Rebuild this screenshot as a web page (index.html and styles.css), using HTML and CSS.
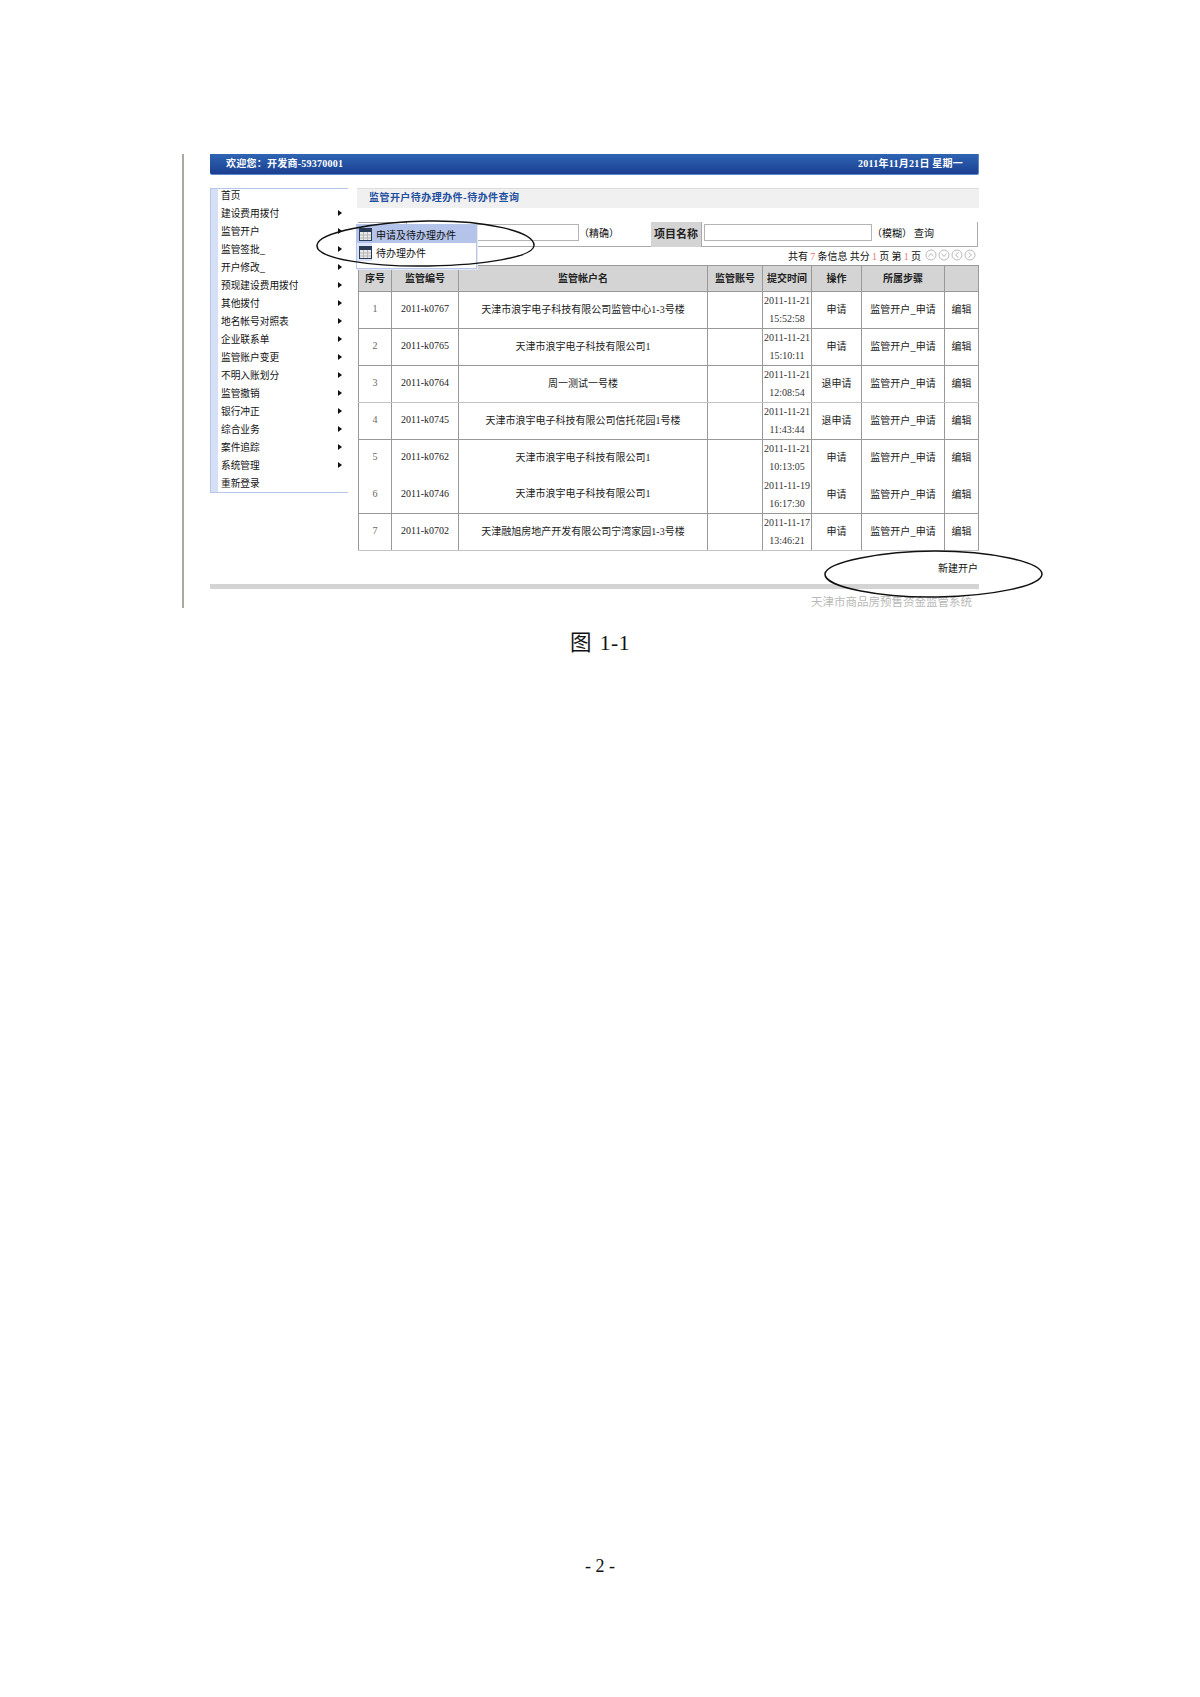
FILE: index.html
```html
<!DOCTYPE html>
<html lang="zh-CN">
<head>
<meta charset="utf-8">
<title>图 1-1</title>
<link rel="stylesheet" href="styles.css">
</head>
<body>
<div class="page">
  <div class="frame">
    <header class="banner">
      <span>欢迎您：开发商<span class="serif">-59370001</span></span>
      <span><span class="serif">2011</span>年<span class="serif">11</span>月<span class="serif">21</span>日 星期一</span>
    </header>
    <div class="main">
      <nav class="side">
        <div class="item first">首页</div>
        <div class="item sub">建设费用拨付</div>
        <div class="item sub">监管开户</div>
        <div class="item sub">监管签批_</div>
        <div class="item sub">开户修改_</div>
        <div class="item sub">预现建设费用拨付</div>
        <div class="item sub">其他拨付</div>
        <div class="item sub">地名帐号对照表</div>
        <div class="item sub">企业联系单</div>
        <div class="item sub">监管账户变更</div>
        <div class="item sub">不明入账划分</div>
        <div class="item sub">监管撤销</div>
        <div class="item sub">银行冲正</div>
        <div class="item sub">综合业务</div>
        <div class="item sub">案件追踪</div>
        <div class="item sub">系统管理</div>
        <div class="item">重新登录</div>
      </nav>
      <section class="content">
        <h1 class="title">监管开户待办理办件-待办件查询</h1>
        <div class="search">
          <div class="cell-a"></div>
          <input class="in-a" type="text">
          <span class="hint-a">（精确）</span>
          <div class="label">项目名称</div>
          <input class="in-b" type="text">
          <span class="hint-b">（模糊）</span>
          <span class="query">查询</span>
        </div>
        <div class="pager">
          <span>共有 <b class="num">7</b> 条信息 共分 <b class="num">1</b> 页 第 <b class="num">1</b> 页</span>
          <span class="pg-icons">
            <svg class="pg" viewBox="0 0 12 12"><circle cx="6" cy="6" r="5"/><path d="M3.5 7.5 6 4.5l2.5 3"/></svg>
            <svg class="pg" viewBox="0 0 12 12"><circle cx="6" cy="6" r="5"/><path d="M3.5 4.5 6 7.5l2.5-3"/></svg>
            <svg class="pg" viewBox="0 0 12 12"><circle cx="6" cy="6" r="5"/><path d="M7.5 3.5 4.5 6l3 2.5"/></svg>
            <svg class="pg" viewBox="0 0 12 12"><circle cx="6" cy="6" r="5"/><path d="M4.5 3.5 7.5 6l-3 2.5"/></svg>
          </span>
        </div>
        <table class="grid">
          <colgroup>
            <col class="c1"><col class="c2"><col class="c3"><col class="c4"><col class="c5"><col class="c6"><col class="c7"><col class="c8">
          </colgroup>
          <thead>
            <tr><th>序号</th><th>监管编号</th><th>监管帐户名</th><th>监管账号</th><th>提交时间</th><th>操作</th><th>所属步骤</th><th></th></tr>
          </thead>
          <tbody>
            <tr><td class="serif dim">1</td><td class="serif">2011-k0767</td><td>天津市浪宇电子科技有限公司监管中心<span class="serif">1-3</span>号楼</td><td></td><td class="serif date">2011-11-21<br>15:52:58</td><td>申请</td><td>监管开户_申请</td><td class="edit">编辑</td></tr>
            <tr><td class="serif dim">2</td><td class="serif">2011-k0765</td><td>天津市浪宇电子科技有限公司<span class="serif">1</span></td><td></td><td class="serif date">2011-11-21<br>15:10:11</td><td>申请</td><td>监管开户_申请</td><td class="edit">编辑</td></tr>
            <tr class="light"><td class="serif dim">3</td><td class="serif">2011-k0764</td><td>周一测试一号楼</td><td></td><td class="serif date">2011-11-21<br>12:08:54</td><td>退申请</td><td>监管开户_申请</td><td class="edit">编辑</td></tr>
            <tr><td class="serif dim">4</td><td class="serif">2011-k0745</td><td>天津市浪宇电子科技有限公司信托花园<span class="serif">1</span>号楼</td><td></td><td class="serif date">2011-11-21<br>11:43:44</td><td>退申请</td><td>监管开户_申请</td><td class="edit">编辑</td></tr>
            <tr class="open"><td class="serif dim">5</td><td class="serif">2011-k0762</td><td>天津市浪宇电子科技有限公司<span class="serif">1</span></td><td></td><td class="serif date">2011-11-21<br>10:13:05</td><td>申请</td><td>监管开户_申请</td><td class="edit">编辑</td></tr>
            <tr><td class="serif dim">6</td><td class="serif">2011-k0746</td><td>天津市浪宇电子科技有限公司<span class="serif">1</span></td><td></td><td class="serif date">2011-11-19<br>16:17:30</td><td>申请</td><td>监管开户_申请</td><td class="edit">编辑</td></tr>
            <tr class="light"><td class="serif dim">7</td><td class="serif">2011-k0702</td><td>天津融旭房地产开发有限公司宁湾家园<span class="serif">1-3</span>号楼</td><td></td><td class="serif date">2011-11-17<br>13:46:21</td><td>申请</td><td>监管开户_申请</td><td class="edit">编辑</td></tr>
          </tbody>
        </table>
        <div class="actions">新建开户</div>
        <div class="popup">
          <div class="pop-row active">
            <svg class="ico" viewBox="0 0 13 13"><rect x=".5" y=".5" width="12" height="12" fill="#e8e8e8" stroke="#2b3a55"/><rect x="1" y="1" width="11" height="3" fill="#2b3a55"/><path d="M1 7h11M1 10h11M4.500 4v8M8.500 4v8" stroke="#b5b5b5" fill="none"/></svg>
            <span>申请及待办理办件</span>
          </div>
          <div class="pop-row">
            <svg class="ico" viewBox="0 0 13 13"><rect x=".5" y=".5" width="12" height="12" fill="#e8e8e8" stroke="#2b3a55"/><rect x="1" y="1" width="11" height="3" fill="#2b3a55"/><path d="M1 7h11M1 10h11M4.500 4v8M8.500 4v8" stroke="#b5b5b5" fill="none"/></svg>
            <span>待办理办件</span>
          </div>
        </div>
      </section>
    </div>
    <div class="bar"></div>
    <div class="foot">天津市商品房预售资金监管系统</div>
    <svg class="ring ring-a" viewBox="0 0 220 48"><path d="M2 25C4 12 60 2 112 1c56-1 106 10 107 24 1 12-50 20-105 21C58 47 0 39 2 25Z"/></svg>
    <svg class="ring ring-b" viewBox="0 0 220 48"><path d="M2 24C3 12 60 1 112 1c56 0 106 11 107 23 0 12-50 22-105 23C58 48 1 37 2 24Z"/></svg>
  </div>
  <p class="caption">图 1-1</p>
  <p class="pageno">- 2 -</p>
</div>
</body>
</html>
```

FILE: styles.css
```css
* { box-sizing: border-box; }
html, body { margin: 0; padding: 0; background: #fff; }
body { font-family: "Noto Sans CJK SC", "Liberation Sans", sans-serif; color: #111; font-size: 10px; }
.page { height: 1697px; padding: 154px 0 121px; display: flex; flex-direction: column; }
.serif { font-family: "Liberation Serif", "Noto Sans CJK SC", serif; }

.frame { position: relative; margin-left: 182px; width: 797px; height: 454px; padding-left: 26px; border-left: 2px solid #aaa9a2; }

.banner { height: 21px; padding: 0 15px 4px 16px; display: flex; justify-content: space-between; align-items: center; color: #fff; font-weight: 700; font-size: 10px; letter-spacing: .25px; background: linear-gradient(#2f65b4, #1b3f90); border-bottom: 1px solid #5f88cc; border-right: 1px solid #5f88cc; border-radius: 0 0 2px 2px; }

.main { margin-top: 13px; display: flex; gap: 9px; height: 396px; }

.side { width: 138px; height: 305px; flex: none; padding-left: 11px; font-size: 9.7px; background: linear-gradient(to right, #d5dff5 8px, #fff 8px); border-top: 1px solid #b5c6e8; border-bottom: 1px solid #b5c6e8; box-shadow: inset 1px 0 #b5c6e8; }
.item { height: 18px; line-height: 18px; padding-right: 6px; display: flex; justify-content: space-between; align-items: center; white-space: nowrap; }
.item.first { height: 15px; line-height: 13px; align-items: flex-start; }
.item.sub::after { content: ""; border-left: 4px solid #111; border-top: 3px solid transparent; border-bottom: 3px solid transparent; }

.content { position: relative; width: 622px; }
.title { margin: 0; height: 20px; padding-left: 12px; line-height: 16px; font-size: 10px; letter-spacing: .45px; font-weight: 700; color: #1f4f9f; background: #f0f0f0; border-top: 1px solid #ddd; }

.search { margin: 14px 0 0 1px; width: 620px; height: 25px; display: flex; align-items: center; border-bottom: 1px solid #aaa; border-right: 1px solid #aaa; }
.cell-a { width: 49px; height: 25px; border-top: 1px solid #aaa; border-right: 1px solid #aaa; }
.search input { height: 17px; padding: 0; background: #fff; border: 1px solid #b4b4b4; border-radius: 0; }
.in-a { width: 172px; margin-top: -4px; }
.hint-a { width: 72px; margin-top: -4px; }
.label { width: 51px; height: 25px; line-height: 23px; text-align: center; font-size: 11px; font-weight: 700; color: #222; background: #d4d4d4; border-right: 1px solid #aaa; }
.in-b { width: 168px; margin: -4px 0 0 2px; }
.hint-b { width: 42px; margin-top: -4px; }
.query { margin-top: -4px; }

.pager { margin-left: 1px; width: 620px; height: 18px; padding: 0 2px 2px 0; display: flex; justify-content: flex-end; align-items: center; gap: 4px; }
.num { font-weight: 400; color: #e77; font-family: "Liberation Serif", serif; }
.pg-icons { display: flex; gap: 1px; }
.pg { width: 12px; height: 12px; fill: none; stroke: #bbb; stroke-width: 1; }

.grid { margin-left: 1px; width: 620px; table-layout: fixed; border-collapse: collapse; text-align: center; }
.c1 { width: 33px; }
.c2 { width: 67px; }
.c3 { width: 249px; }
.c4 { width: 55px; }
.c5 { width: 49px; }
.c6 { width: 50px; }
.c7 { width: 83px; }
.c8 { width: 34px; }
.grid th, .grid td { padding: 0 0 2px; border: 1px solid #999; overflow: hidden; white-space: nowrap; }
.grid th { height: 26px; font-size: 10px; font-weight: 700; color: #222; background: #d4d4d4; }
.grid td { height: 37px; line-height: 18px; color: #222; }
.grid .date { padding: 0; color: #333; }
.grid .dim { color: #666; }
.grid .edit { border-left-color: #c4c4c4; }
.grid tr.light td { border-bottom-color: #c4c4c4; }
.grid tr.open td { border-bottom: none; }
.grid tr.open + tr td { border-top: none; }

.actions { margin-left: 1px; width: 620px; padding-top: 9px; text-align: right; line-height: 16px; color: #111; }

.popup { position: absolute; left: -1px; top: 36px; width: 121px; height: 45px; background: #fff; border: 1px solid #b5c6e8; box-shadow: 1px 1px 0 #e4e8f4; }
.pop-row { height: 18px; padding-left: 2px; display: flex; align-items: center; gap: 4px; background: linear-gradient(to right, #dbe4f8 15px, #fff 15px); white-space: nowrap; }
.pop-row.active { background: #b3c3ea; }
.ico { width: 13px; height: 13px; flex: none; }

.bar { width: 769px; height: 5px; background: #d4d4d4; }
.foot { margin-top: 7px; width: 762px; text-align: right; font-size: 11.5px; line-height: 11px; color: #b9b9b9; white-space: nowrap; }

.ring { position: absolute; width: 220px; height: 48px; fill: none; stroke: #111; stroke-width: 1.5; pointer-events: none; }
.ring-a { left: 131px; top: 66px; }
.ring-b { left: 639px; top: 396px; }

.caption { margin: 23px 0 0; text-align: center; font-family: "Liberation Serif", "Noto Sans CJK SC", serif; font-size: 21.5px; letter-spacing: .5px; word-spacing: 2px; line-height: 24px; color: #111; }
.pageno { margin: auto 0 0; text-align: center; font-family: "Liberation Serif", serif; font-size: 18px; line-height: 20px; color: #111; }
```
